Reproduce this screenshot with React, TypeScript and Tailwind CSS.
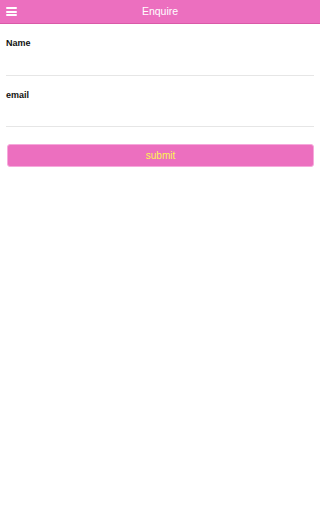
export default function App() {
  return (
    <div className="min-h-[512px] bg-white font-['Liberation_Sans',Arial,sans-serif]">
      {/* Header */}
      <header className="relative flex h-[24px] items-center justify-center border-b border-[#d95aa8] bg-[#ec6fbf]">
        <button className="absolute left-[6px] top-[7px] flex w-[11px] flex-col gap-[1.5px]">
          <span className="block h-[2px] w-full rounded-[1px] bg-white" />
          <span className="block h-[2px] w-full rounded-[1px] bg-white" />
          <span className="block h-[2px] w-full rounded-[1px] bg-white" />
        </button>
        <h1 className="text-[10.5px] text-white">Enquire</h1>
      </header>

      <form className="px-[6px]">
        <div className="border-b border-[#e6e6e6] pt-[14px] pb-[26px]">
          <label className="block text-[9px] font-bold leading-[11px] text-[#111]">Name</label>
        </div>
        <div className="border-b border-[#e6e6e6] pt-[14px] pb-[25px]">
          <label className="block text-[9px] font-bold leading-[11px] text-[#111]">email</label>
        </div>
        <div className="pt-[15px] pl-[1px]">
          <button
            type="button"
            className="h-[23px] w-full rounded-[3px] border border-[#f6a9dc] bg-[#ec6fbf] text-[10px] text-[#fbf650]"
          >
            submit
          </button>
        </div>
      </form>
    </div>
  );
}
